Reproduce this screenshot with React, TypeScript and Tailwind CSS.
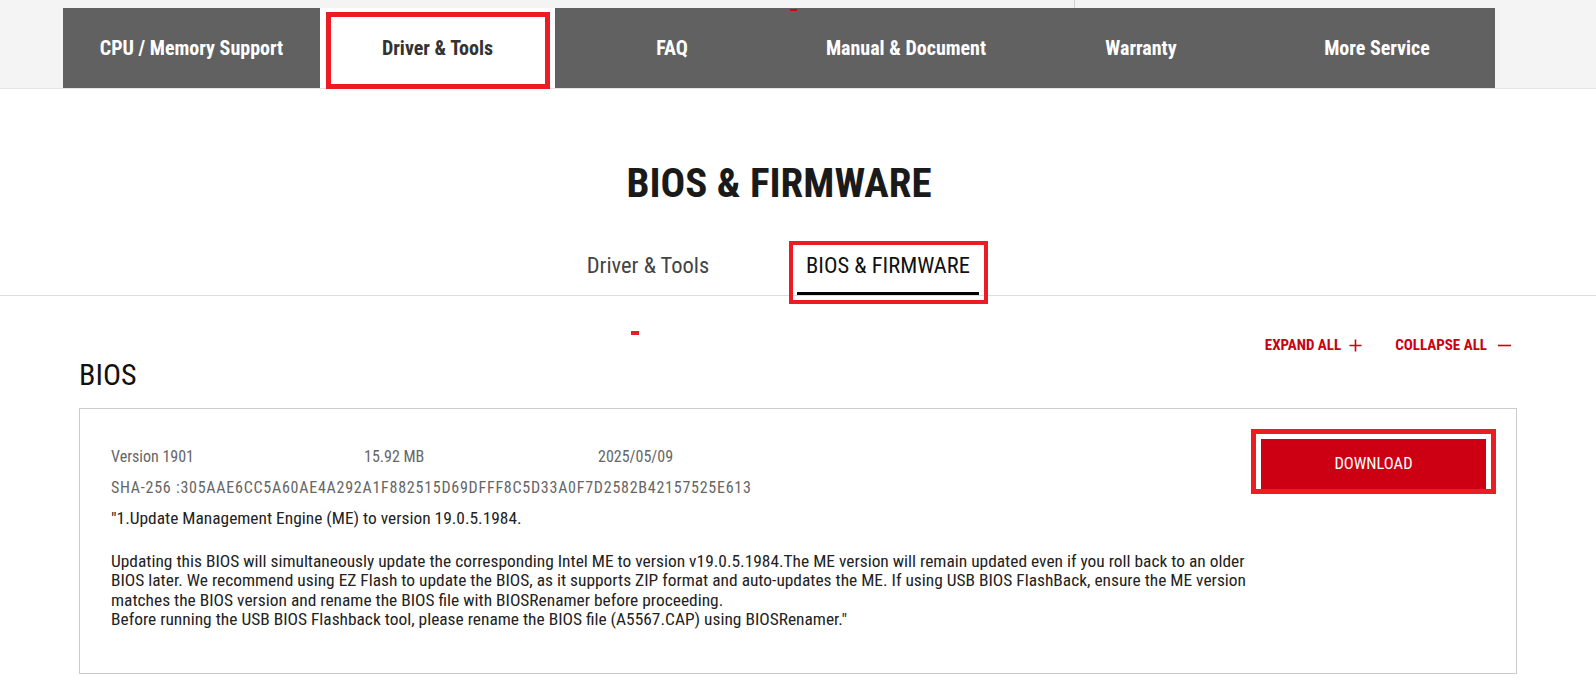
import React from "react";

const COND = "font-['Roboto_Condensed','Liberation_Sans_Narrow',Roboto,sans-serif]";

const tabs = [
  { label: "CPU / Memory Support", w: "w-[257px]" },
  { label: "Driver & Tools", w: "w-[235px]", active: true },
  { label: "FAQ", w: "w-[234px]" },
  { label: "Manual & Document", w: "w-[234px]" },
  { label: "Warranty", w: "w-[236px]" },
  { label: "More Service", w: "w-[236px]" },
];

function PlusIcon() {
  return (
    <svg width="13" height="13" viewBox="0 0 13 13" className="block">
      <path d="M6.5 0.5v12M0.5 6.5h12" stroke="#cc0011" strokeWidth="1.6" />
    </svg>
  );
}

function MinusIcon() {
  return (
    <svg width="13" height="13" viewBox="0 0 13 13" className="block">
      <path d="M0 6.5h13" stroke="#cc0011" strokeWidth="1.6" />
    </svg>
  );
}

export default function App() {
  return (
    <div className={`${COND} min-h-[692px] bg-white text-[#222]`}>
      {/* top service tabs */}
      <div className="relative h-[89px] border-b border-[#e4e4e4] bg-[#f4f4f4] pt-[8px]">
        <div className="absolute left-[1074px] top-0 h-[8px] w-px bg-[#d0d0d0]" />
        <div className="ml-[63px] flex h-[80px]">
          {tabs.map((t) =>
            t.active ? (
              <div key={t.label} className={`${t.w} relative flex h-full items-center justify-center bg-white`}>
                <div className="absolute left-[6px] right-[5px] top-[4px] -bottom-[1px] border-[5px] border-[#ec1c24]" />
                <span className="relative text-[20px] font-bold text-[#333]">{t.label}</span>
                <div className="absolute -right-[3px] top-[1px] h-[2px] w-[3px] bg-[#cc0011]" />
              </div>
            ) : (
              <div key={t.label} className={`${t.w} relative flex h-full items-center justify-center bg-[#616161]`}>
                <span className="text-[20px] font-bold text-white">{t.label}</span>
                {t.label === "Manual & Document" && (
                  <div className="absolute left-[1px] top-[1px] h-[2px] w-[7px] bg-[#cc0011]" />
                )}
              </div>
            )
          )}
        </div>
      </div>

      {/* page title + sub tabs */}
      <div className="border-b border-[#dddddd]">
        <h1 className="ml-[63px] w-[1432px] pt-[70px] text-center text-[41px] font-bold leading-[48px] text-[#1a1a1a]">
          BIOS &amp; FIRMWARE
        </h1>
        <div className="ml-[557px] mt-[30px] flex gap-[58px]">
          <div className="flex h-[58px] w-[182px] justify-center pt-[14px] text-[22.5px] leading-[28px] text-[#444]">
            Driver &amp; Tools
          </div>
          <div className="relative flex h-[58px] w-[182px] justify-center pt-[14px] text-[22.5px] leading-[28px] text-[#111]">
            <div className="absolute -left-[8px] -right-[9px] top-[4px] -bottom-[9px] border-[4px] border-[#ec1c24]" />
            <span className="relative">BIOS &amp; FIRMWARE</span>
            <div className="absolute bottom-0 left-0 right-0 h-[3px] bg-black" />
          </div>
        </div>
      </div>

      {/* list */}
      <div className="relative mx-[79px]">
        <div className="absolute left-[552px] top-[35px] h-[4px] w-[8px] bg-[#ec1c24]" />
        <div className="flex justify-end pt-[39px] pr-[6px] text-[15px] font-bold leading-[20px] text-[#cc0011]">
          <span className="flex items-center gap-[8px]">
            EXPAND ALL <PlusIcon />
          </span>
          <span className="ml-[33px] flex items-center gap-[11px]">
            COLLAPSE ALL <MinusIcon />
          </span>
        </div>
        <h2 className="mt-[2px] text-[30px] leading-[36px] text-[#111]">BIOS</h2>
        <div className="mt-[15px] flex h-[266px] border border-[#cccccc]">
          <div className="flex-1 pl-[31px] pt-[38px]">
            <div className="flex text-[16px] leading-[20px] text-[#666]">
              <span className="w-[253px]">Version 1901</span>
              <span className="w-[234px]">15.92 MB</span>
              <span>2025/05/09</span>
            </div>
            <div className="mt-[11px] text-[16px] leading-[20px] tracking-[0.75px] text-[#666]">
              SHA-256 :305AAE6CC5A60AE4A292A1F882515D69DFFF8C5D33A0F7D2582B42157525E613
            </div>
            <div className="mt-[11px] w-[1150px] text-[17.4px] leading-[19.5px] text-[#222]">
              <p>"1.Update Management Engine (ME) to version 19.0.5.1984.</p>
              <p className="mt-[23px]">
                Updating this BIOS will simultaneously update the corresponding Intel ME to version v19.0.5.1984.The ME version will remain updated even if you roll back to an older BIOS later. We recommend using EZ Flash to update the BIOS, as it supports ZIP format and auto-updates the ME. If using USB BIOS FlashBack, ensure the ME version matches the BIOS version and rename the BIOS file with BIOSRenamer before proceeding.
              </p>
              <p>Before running the USB BIOS Flashback tool, please rename the BIOS file (A5567.CAP) using BIOSRenamer."</p>
            </div>
          </div>
          <div className="pr-[30px] pt-[30px]">
            <div className="relative">
              <div className="absolute -left-[10px] -right-[10px] -top-[10px] -bottom-[5px] border-[5px] border-[#ec1c24]" />
              <button className="relative flex h-[50px] w-[225px] items-center justify-center bg-[#cc0012] text-[16.5px] text-white">
                DOWNLOAD
              </button>
            </div>
          </div>
        </div>
      </div>
    </div>
  );
}
